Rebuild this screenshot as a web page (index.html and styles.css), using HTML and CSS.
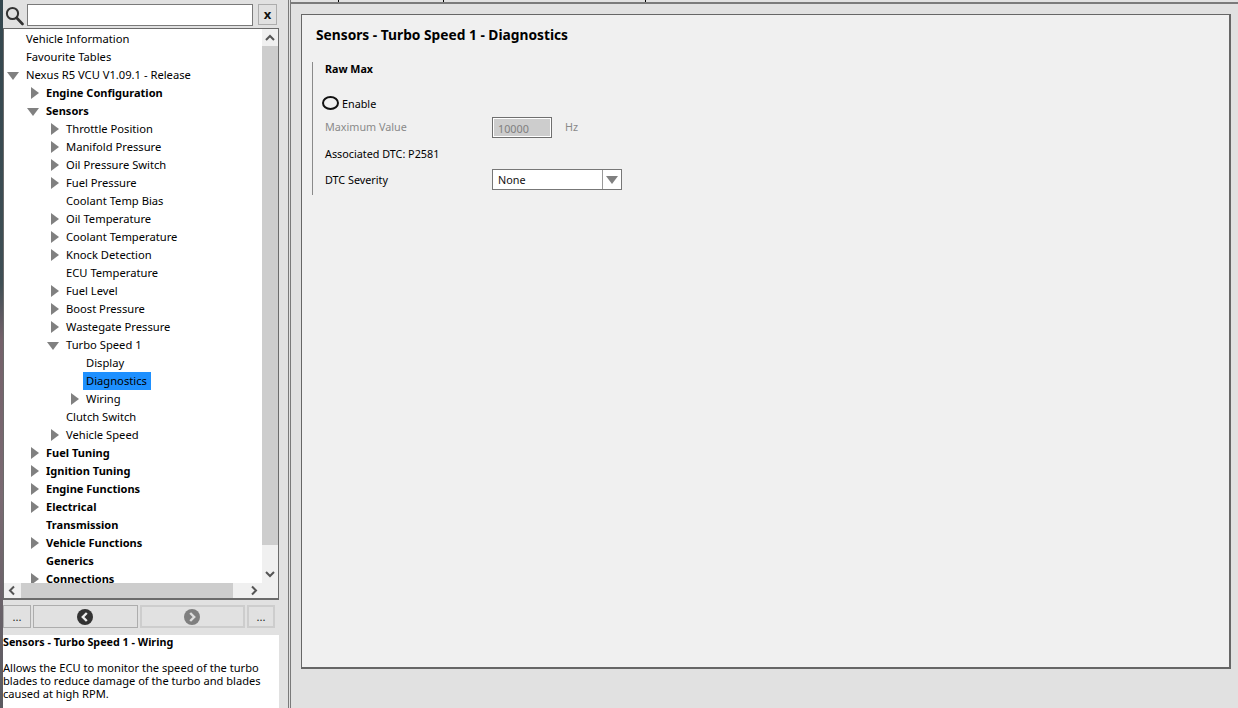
FILE: index.html
```html
<!DOCTYPE html>
<html lang="en">
<head>
<meta charset="utf-8">
<title>Sensors - Turbo Speed 1 - Diagnostics</title>
<link rel="stylesheet" href="styles.css">
</head>
<body>
<div class="app">
  <div class="desktop-edge"></div>
  <aside class="sidebar">
    <div class="search">
      <svg class="search-icon" width="19" height="20" viewBox="0 0 19 20"><circle cx="7.5" cy="7.5" r="5.6" fill="none" stroke="#333" stroke-width="2"/><path d="M11.8 12 L17.5 18" stroke="#333" stroke-width="2.6" stroke-linecap="round"/></svg>
      <div class="search-input"></div>
      <button class="clear">x</button>
    </div>
    <div class="tree-box">
      <div class="tree-top">
        <div class="tree">
          <div class="row l0"><i class="slot"></i>Vehicle Information</div>
          <div class="row l0"><i class="slot"></i>Favourite Tables</div>
          <div class="row l0"><i class="slot open"></i>Nexus R5 VCU V1.09.1 - Release</div>
          <div class="row l1 b"><i class="slot shut"></i>Engine Configuration</div>
          <div class="row l1 b"><i class="slot open"></i>Sensors</div>
          <div class="row l2"><i class="slot shut"></i>Throttle Position</div>
          <div class="row l2"><i class="slot shut"></i>Manifold Pressure</div>
          <div class="row l2"><i class="slot shut"></i>Oil Pressure Switch</div>
          <div class="row l2"><i class="slot shut"></i>Fuel Pressure</div>
          <div class="row l2"><i class="slot"></i>Coolant Temp Bias</div>
          <div class="row l2"><i class="slot shut"></i>Oil Temperature</div>
          <div class="row l2"><i class="slot shut"></i>Coolant Temperature</div>
          <div class="row l2"><i class="slot shut"></i>Knock Detection</div>
          <div class="row l2"><i class="slot"></i>ECU Temperature</div>
          <div class="row l2"><i class="slot shut"></i>Fuel Level</div>
          <div class="row l2"><i class="slot shut"></i>Boost Pressure</div>
          <div class="row l2"><i class="slot shut"></i>Wastegate Pressure</div>
          <div class="row l2"><i class="slot open"></i>Turbo Speed 1</div>
          <div class="row l3"><i class="slot"></i>Display</div>
          <div class="row l3"><i class="slot"></i><span class="selected">Diagnostics</span></div>
          <div class="row l3"><i class="slot shut"></i>Wiring</div>
          <div class="row l2"><i class="slot"></i>Clutch Switch</div>
          <div class="row l2"><i class="slot shut"></i>Vehicle Speed</div>
          <div class="row l1 b"><i class="slot shut"></i>Fuel Tuning</div>
          <div class="row l1 b"><i class="slot shut"></i>Ignition Tuning</div>
          <div class="row l1 b"><i class="slot shut"></i>Engine Functions</div>
          <div class="row l1 b"><i class="slot shut"></i>Electrical</div>
          <div class="row l1 b"><i class="slot"></i>Transmission</div>
          <div class="row l1 b"><i class="slot shut"></i>Vehicle Functions</div>
          <div class="row l1 b"><i class="slot"></i>Generics</div>
          <div class="row l1 b"><i class="slot shut"></i>Connections</div>
        </div>
        <div class="vscroll">
          <svg class="sb-btn" width="16" height="17" viewBox="0 0 16 17"><path d="M4 11 L8 7 L12 11" fill="none" stroke="#555" stroke-width="2"/></svg>
          <div class="vthumb"></div>
          <svg class="sb-btn" width="16" height="17" viewBox="0 0 16 17"><path d="M4 6 L8 10 L12 6" fill="none" stroke="#555" stroke-width="2"/></svg>
        </div>
      </div>
      <div class="hscroll">
        <svg class="sb-btn" width="17" height="15" viewBox="0 0 17 15"><path d="M10 3.500 L6 7.500 L10 11.500" fill="none" stroke="#555" stroke-width="2"/></svg>
        <div class="hthumb"></div>
        <svg class="sb-btn" width="17" height="15" viewBox="0 0 17 15"><path d="M7 3.500 L11 7.500 L7 11.500" fill="none" stroke="#555" stroke-width="2"/></svg>
      </div>
    </div>
    <div class="nav">
      <button class="nav-btn small">...</button>
      <button class="nav-btn wide">
        <svg width="16" height="16" viewBox="0 0 16 16"><circle cx="8" cy="8" r="8" fill="#333"/><path d="M9.800 4 L5.800 8 L9.800 12" fill="none" stroke="#eee" stroke-width="2.400"/></svg>
      </button>
      <button class="nav-btn wide off">
        <svg width="16" height="16" viewBox="0 0 16 16"><circle cx="8" cy="8" r="8" fill="#7f7f7f"/><path d="M6.200 4 L10.200 8 L6.200 12" fill="none" stroke="#ddd" stroke-width="2.400"/></svg>
      </button>
      <button class="nav-btn small off">...</button>
    </div>
    <div class="desc">
      <div class="desc-title">Sensors - Turbo Speed 1 - Wiring</div>
      <p>Allows the ECU to monitor the speed of the turbo blades to reduce damage of the turbo and blades caused at high RPM.</p>
    </div>
  </aside>
  <div class="splitter"></div>
  <main class="main">
    <div class="tabs"><i class="tick t1"></i><i class="tick t2"></i><i class="tick t3"></i></div>
    <section class="panel">
      <h1>Sensors - Turbo Speed 1 - Diagnostics</h1>
      <div class="group">
        <h2>Raw Max</h2>
        <label class="enable"><span class="radio"></span>Enable</label>
        <div class="field dim">
          <span class="name">Maximum Value</span>
          <span class="num">10000</span>
          <span class="unit">Hz</span>
        </div>
        <div class="dtc">Associated DTC: P2581</div>
        <div class="field sev">
          <span class="name">DTC Severity</span>
          <span class="select"><span class="val">None</span><span class="drop"></span></span>
        </div>
      </div>
    </section>
  </main>
</div>
</body>
</html>
```
FILE: styles.css
```css
* { box-sizing: border-box; }
html, body { margin: 0; height: 100%; }
body {
  font-family: "Noto Sans", "Open Sans", sans-serif;
  font-size: 11.2px;
  color: #000;
  background: #e1e1e1;
  overflow: hidden;
}
.app { display: flex; width: 1238px; height: 708px; }
.desktop-edge {
  width: 3px;
  background: linear-gradient(#34474f 0, #3f4f55 40%, #74616a 48%, #7a6a72 70%, #5a5a60 100%);
}
.sidebar { width: 285px; display: flex; flex-direction: column; }
.search { height: 28px; display: flex; align-items: flex-start; padding: 4px 0 0 2px; }
.search-icon { margin: 2px 3px 0 0; flex: none; }
.search-input { width: 226px; height: 22px; background: #fff; border: 1px solid #7a7a7a; }
.clear {
  width: 19px; height: 21px; margin-left: 5px; padding: 0 0 3px;
  border: 1px solid #adadad; background: #e1e1e1;
  font: bold 13px "Noto Sans", sans-serif; color: #111;
}
.tree-box { width: 276px; height: 572px; border: 1px solid #6b6b6b; border-bottom-width: 2px; background: #f0f0f0; display: flex; flex-direction: column; }
.tree-top { flex: 1; display: flex; min-height: 0; }
.tree { flex: 1; background: #fff; overflow: hidden; padding-top: 1px; }
.row { height: 18px; line-height: 18px; display: flex; white-space: nowrap; }
.row.b { font-weight: 700; font-size: 11.05px; }
.l1 { padding-left: 20px; }
.l2 { padding-left: 40px; }
.l3 { padding-left: 60px; }
.slot { width: 22px; flex: none; position: relative; display: block; }
.slot.shut::before {
  content: ""; position: absolute; left: 7px; top: 3px;
  border-left: 8px solid #808080; border-top: 6px solid transparent; border-bottom: 6px solid transparent;
}
.slot.open::before {
  content: ""; position: absolute; left: 3px; top: 6px;
  border-top: 8px solid #808080; border-left: 6px solid transparent; border-right: 6px solid transparent;
}
.selected { background: #1e90ff; margin-left: -3px; padding: 0 4px 0 3px; height: 18px; }
.vscroll { width: 16px; flex: none; display: flex; flex-direction: column; background: #f0f0f0; }
.sb-btn { display: block; flex: none; }
.vthumb { height: 499px; background: #cdcdcd; }
.vscroll .sb-btn:last-child { margin-top: auto; }
.hscroll { height: 15px; flex: none; display: flex; align-items: center; background: #f0f0f0; }
.hthumb { width: 212px; height: 15px; background: #cdcdcd; }
.hscroll .sb-btn:last-child { margin-left: auto; margin-right: 16px; }
.nav { height: 35px; display: flex; gap: 2px; padding-top: 5px; }
.nav-btn {
  height: 23px; padding: 0; border: 1px solid #adadad; background: #e1e1e1;
  display: flex; align-items: center; justify-content: center;
  font: 11.2px "Noto Sans", sans-serif; color: #222;
}
.nav-btn svg { margin-right: 2px; }
.nav-btn.small { width: 28px; }
.nav-btn.wide { width: 105px; }
.nav-btn.off { border: 2px solid #cdcdcd; }
.desc { width: 276px; flex: 1; background: #fff; line-height: 13px; font-size: 11.1px; }
.desc-title { font-weight: 700; font-size: 10.75px; height: 26px; padding-top: 1px; line-height: 13px; }
.desc p { margin: 0; line-height: 13px; }
.splitter { width: 3px; border-left: 1px solid #7a7a7a; border-right: 1px solid #7a7a7a; background: #e1e1e1; }
.main { flex: 1; display: flex; flex-direction: column; padding: 0 7px 0 10px; }
.tabs { height: 14px; margin: 0 -7px 0 -10px; position: relative; background: #e1e1e1; border-top: 2px solid #e1e1e1; }
.tabs::before { content: ""; position: absolute; left: 0; right: 0; top: 0; height: 2px; background: #7a7a7a; }
.tick { position: absolute; top: -2px; width: 1px; height: 2px; background: #000; }
.t1 { left: 47px; }
.t2 { left: 152px; }
.t3 { left: 354px; }
.panel { width: 930px; height: 655px; border: 1px solid #666; border-right-width: 2px; border-bottom-width: 2px; background: #f0f0f0; padding: 11px 10px 0 10px; font-size: 10.8px; }
.panel h1 { margin: 0 0 0 4px; font-size: 13.75px; line-height: 18px; font-weight: 700; }
.group { margin-top: 18px; border-left: 1px solid #8a8a8a; height: 133px; padding: 0 0 0 12px; }
.group h2 { margin: 0; font-size: 10.7px; line-height: 14px; font-weight: 700; }
.enable { display: flex; align-items: center; height: 14px; margin: 20px 0 0 -3px; }
.radio { width: 17px; height: 14px; border: 2px solid #111; border-radius: 50%; margin-right: 3px; }
.field { display: grid; grid-template-columns: 167px auto auto; justify-content: start; align-items: center; }
.dim { margin-top: 7px; color: #8a8a8a; height: 21px; }
.dim .name, .dim .unit { padding-bottom: 2px; }
.num { width: 60px; height: 21px; border: 1px solid #6f6f6f; box-shadow: inset 0 0 0 1px #fff; background: #cdcdcd; padding: 0 0 0 5px; line-height: 21px; color: #808080; }
.unit { margin-left: 13px; }
.dtc { margin-top: 9px; line-height: 14px; }
.sev { margin-top: 8px; height: 21px; }
.select { width: 130px; height: 21px; border: 1px solid #777; background: #fff; display: flex; color: #111; line-height: 19px; }
.val { width: 110px; padding-left: 5px; border-right: 1px solid #999; }
.drop { flex: 1; position: relative; }
.drop::before { content: ""; position: absolute; left: 3px; top: 6px; border-top: 8px solid #808080; border-left: 6px solid transparent; border-right: 6px solid transparent; }
```
